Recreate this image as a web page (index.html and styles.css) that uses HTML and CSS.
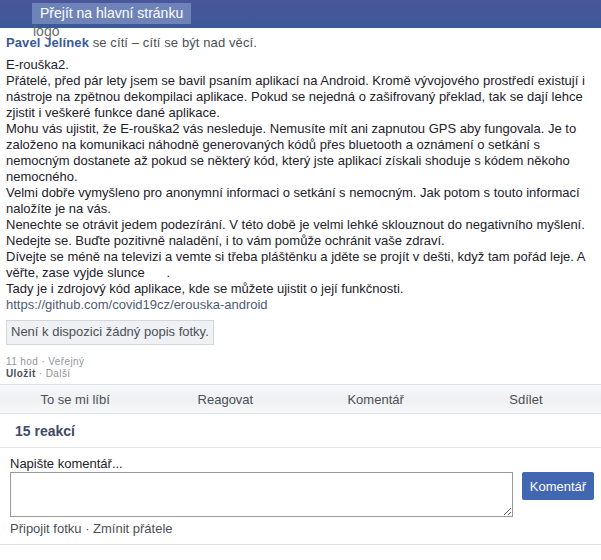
FILE: index.html
```html
<!DOCTYPE html>
<html lang="cs">
<head>
<meta charset="utf-8">
<title>Pavel Jelínek</title>
<link rel="stylesheet" href="styles.css">
</head>
<body>
<header class="topbar">
  <a class="home" href="#">Přejít na hlavní stránku</a>
</header>
<span class="logo">logo</span>
<main class="post">
  <div class="author"><a class="name" href="#">Pavel Jelínek</a> se cítí – cítí se být nad věcí.</div>
  <div class="body">
    <div>E-rouška2.</div>
    <div>Přátelé, před pár lety jsem se bavil psaním aplikací na Android. Kromě vývojového prostředí existují i nástroje na zpětnou dekompilaci aplikace. Pokud se nejedná o zašifrovaný překlad, tak se dají lehce zjistit i veškeré funkce dané aplikace.</div>
    <div>Mohu vás ujistit, že E-rouška2 vás nesleduje. Nemusíte mít ani zapnutou GPS aby fungovala. Je to založeno na komunikaci náhodně generovaných kódů přes bluetooth a oznámení o setkání s nemocným dostanete až pokud se některý kód, který jste aplikací získali shoduje s kódem někoho nemocného.</div>
    <div>Velmi dobře vymyšleno pro anonymní informaci o setkání s nemocným. Jak potom s touto informací naložíte je na vás.</div>
    <div>Nenechte se otrávit jedem podezírání. V této době je velmi lehké sklouznout do negativního myšlení.</div>
    <div>Nedejte se. Buďte pozitivně naladění, i to vám pomůže ochránit vaše zdraví.</div>
    <div>Dívejte se méně na televizi a vemte si třeba pláštěnku a jděte se projít v dešti, když tam pořád leje. A věřte, zase vyjde slunce&nbsp;&nbsp;&nbsp;&nbsp;&nbsp;&nbsp;.</div>
    <div>Tady je i zdrojový kód aplikace, kde se můžete ujistit o její funkčnosti.</div>
    <a class="link" href="#">https://github.com/covid19cz/erouska-android</a>
  </div>
  <div class="photo-desc">Není k dispozici žádný popis fotky.</div>
  <div class="meta">
    <div>11 hod · Veřejný</div>
    <div><b class="save">Uložit</b> · Další</div>
  </div>
</main>
<nav class="actions">
  <span>To se mi líbí</span>
  <span>Reagovat</span>
  <span>Komentář</span>
  <span>Sdílet</span>
</nav>
<div class="reactions">15 reakcí</div>
<section class="comment">
  <label class="prompt" for="c">Napište komentář...</label>
  <div class="comment-row">
    <textarea id="c" class="input"></textarea>
    <button class="submit" type="button">Komentář</button>
  </div>
  <div class="comment-links">Připojit fotku · Zmínit přátele</div>
</section>
</body>
</html>
```

FILE: styles.css
```css
body {
  margin: 0;
  background: #fff;
  font-family: "Liberation Sans", Arial, sans-serif;
  font-size: 13px;
  color: #1d2129;
  position: relative;
}

.topbar {
  height: 28px;
  background: linear-gradient(#4a579a, #3b5998);
  display: flex;
  align-items: center;
  padding-left: 32px;
}

.home {
  display: block;
  height: 21px;
  line-height: 21px;
  padding: 0 8px;
  background: #6e84b8;
  color: #fff;
  font-size: 14px;
  text-decoration: none;
  margin-top: -1px;
}

.logo {
  position: absolute;
  left: 33px;
  top: 23px;
  font-size: 14px;
  line-height: 16px;
  color: #6b6b6b;
}

.post {
  padding: 0 6px;
}

.author {
  margin-top: 7px;
  line-height: 16px;
  color: #4b4f56;
  letter-spacing: 0.1px;
}

.name {
  font-weight: bold;
  color: #3b5998;
  text-decoration: none;
}

.body {
  margin-top: 6px;
  line-height: 16px;
  padding-right: 6px;
}

.link {
  color: #4f5b72;
  text-decoration: none;
}

.photo-desc {
  display: inline-block;
  margin-top: 7px;
  padding: 3px 4px 4px;
  line-height: 16px;
  background: #eff1f4;
  border: 1px solid #d3d6db;
  color: #4b4f56;
}

.meta {
  margin-top: 11px;
  font-size: 10px;
  line-height: 12px;
  color: #90949c;
  letter-spacing: 0.4px;
}

.save {
  color: #4b4f56;
}

.actions {
  margin-top: 4px;
  height: 28px;
  border-top: 1px solid #dddfe2;
  border-bottom: 1px solid #dddfe2;
  background: linear-gradient(#f7f8f9, #eff0f2 50%, #f7f8f9);
  display: grid;
  grid-template-columns: repeat(4, 1fr);
  align-items: center;
  text-align: center;
  color: #4b4f56;
}

.reactions {
  height: 33px;
  line-height: 34px;
  padding-left: 15px;
  font-size: 14px;
  font-weight: bold;
  color: #3f4a66;
  border-bottom: 1px solid #e5e6e9;
}

.comment {
  padding: 8px 7px 7px 10px;
  border-bottom: 1px solid #dddfe2;
}

.prompt {
  display: block;
  line-height: 16px;
  color: #1d2129;
}

.comment-row {
  display: flex;
  align-items: flex-start;
  gap: 9px;
}

.input {
  width: 503px;
  height: 45px;
  box-sizing: border-box;
  margin: 0;
  border: 1px solid #9a9a9a;
  resize: vertical;
  font: inherit;
}

.submit {
  width: 72px;
  height: 28px;
  border: 0;
  border-radius: 2px;
  background: #4267b2;
  color: #fff;
  font: inherit;
  font-size: 13px;
  padding: 0;
}

.comment-links {
  margin-top: 4px;
  line-height: 16px;
  color: #4b4f56;
}
```
